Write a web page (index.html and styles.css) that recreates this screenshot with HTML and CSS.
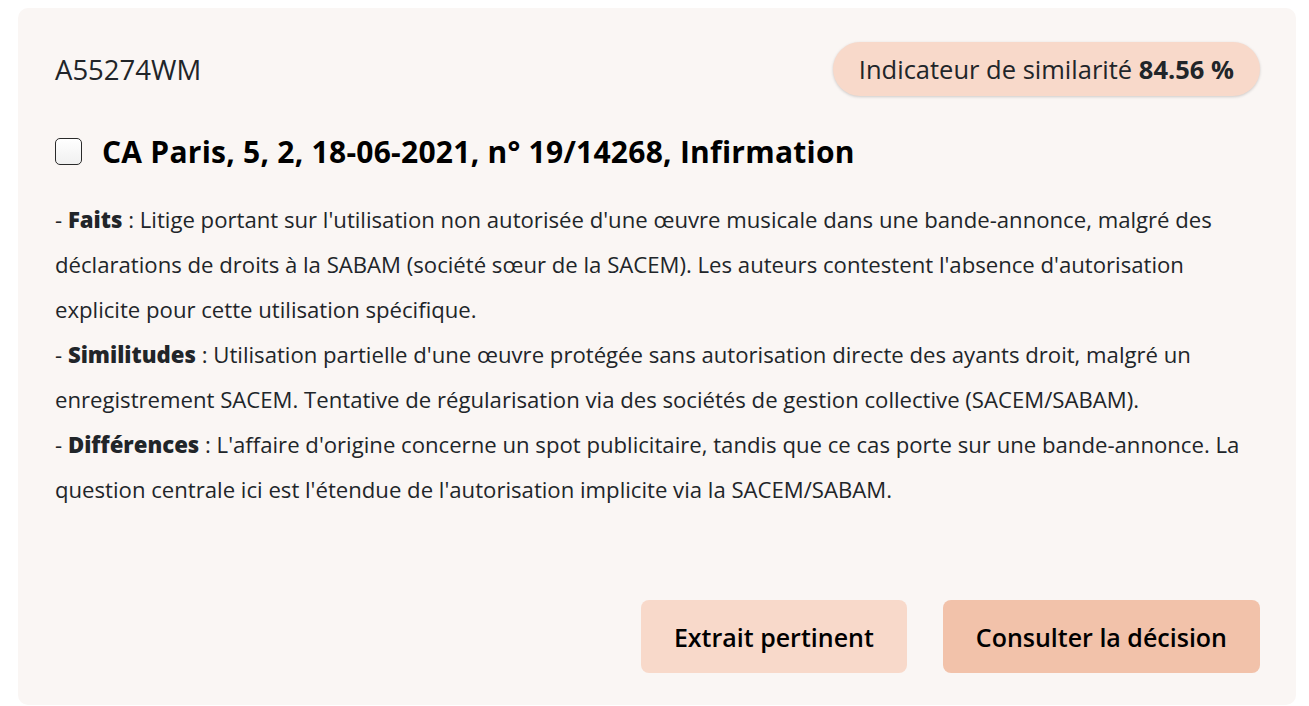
FILE: index.html
```html
<!DOCTYPE html>
<html lang="fr">
<head>
<meta charset="utf-8">
<link rel="stylesheet" href="styles.css">
</head>
<body>
<div class="card">
  <div class="card-head">
    <span class="ref">A55274WM</span>
    <span class="badge">Indicateur de similarité&nbsp;<b>84.56 %</b></span>
  </div>
  <div class="title-row">
    <span class="check"></span>
    <h2 class="title">CA Paris, 5, 2, 18-06-2021, n° 19/14268, Infirmation</h2>
  </div>
  <p class="summary">- <b>Faits</b> : Litige portant sur l'utilisation non autorisée d'une œuvre musicale dans une bande-annonce, malgré des déclarations de droits à la SABAM (société sœur de la SACEM). Les auteurs contestent l'absence d'autorisation explicite pour cette utilisation spécifique.<br>- <b>Similitudes</b> : Utilisation partielle d'une œuvre protégée sans autorisation directe des ayants droit, malgré un enregistrement SACEM. Tentative de régularisation via des sociétés de gestion collective (SACEM/SABAM).<br>- <b>Différences</b> : L'affaire d'origine concerne un spot publicitaire, tandis que ce cas porte sur une bande-annonce. La question centrale ici est l'étendue de l'autorisation implicite via la SACEM/SABAM.</p>
  <div class="actions">
    <button class="btn btn-light">Extrait pertinent</button>
    <button class="btn btn-dark">Consulter la décision</button>
  </div>
</div>
</body>
</html>
```
FILE: styles.css
```css
* { box-sizing: border-box; }
html, body { margin: 0; background: #ffffff; }
body {
  padding: 8px 13px 0 18px;
  font-family: "Open Sans", "Noto Sans", sans-serif;
  color: #212529;
}
.card {
  background: #faf6f4;
  border-radius: 10px;
  padding: 32px 36px 32px 37px;
  height: 697px;
  display: flex;
  flex-direction: column;
}
.card-head {
  display: flex;
  justify-content: space-between;
  align-items: center;
  height: 58px;
}
.ref {
  font-size: 27.5px;
  color: #212529;
}
.badge {
  background: #f8d9ca;
  border-radius: 28px;
  padding: 0 26px;
  height: 54px;
  display: flex;
  align-items: center;
  font-size: 25.5px;
  box-shadow: 0 1px 3px rgba(0,0,0,0.18);
  white-space: nowrap;
}
.badge b { font-weight: 700; }
.title-row {
  display: flex;
  align-items: center;
  gap: 20px;
  margin-top: 33px;
}
.check {
  flex: none;
  width: 27px;
  height: 27px;
  border: 1.5px solid #2a2a2a;
  border-radius: 5px;
  background: linear-gradient(#ffffff, #f0f0f0);
}
.title {
  margin: 0;
  font-size: 30px;
  font-weight: 700;
  color: #000;
  letter-spacing: 0.25px;
}
.summary {
  margin: 25px 0 0;
  font-size: 22.15px;
  line-height: 45px;
}
.summary b { font-weight: 800; }
.actions {
  margin-top: auto;
  display: flex;
  justify-content: flex-end;
  gap: 36px;
}
.btn {
  font-family: inherit;
  border: none;
  border-radius: 8px;
  height: 73px;
  padding: 0 33px;
  font-size: 25px;
  font-weight: 600;
  color: #000;
}
.btn-light { background: #f8d9ca; }
.btn-dark { background: #f2c2aa; }
```
